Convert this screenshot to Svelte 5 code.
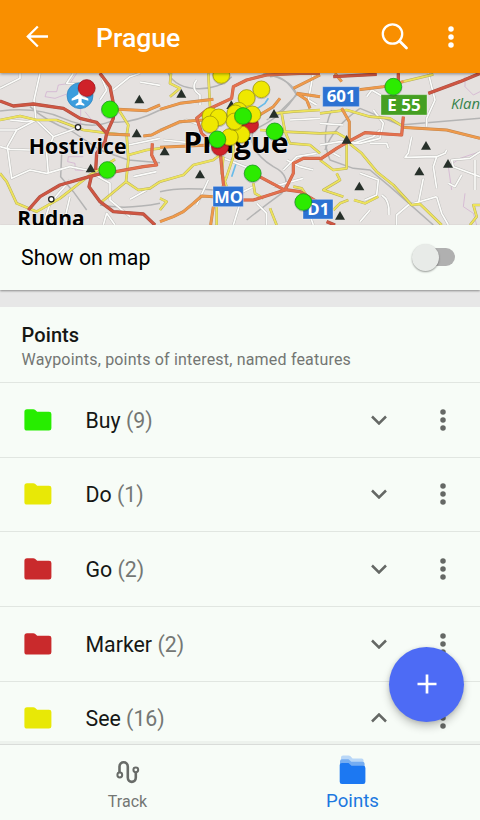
<script>
  const groups = [
    { name: 'Buy', count: 9, color: '#27ed00' },
    { name: 'Do', count: 1, color: '#e8e806' },
    { name: 'Go', count: 2, color: '#c92a2c' },
    { name: 'Marker', count: 2, color: '#c92a2c' },
    { name: 'See', count: 16, color: '#e8e806', open: true }
  ];

  // Map geometry is drawn at three units per pixel.
  const rails = [
    'M0 123 Q110 110 190 145 T330 155 Q390 165 480 120',
    'M90 110 Q140 155 210 180 L300 240 L385 270 L480 278',
    'M185 250 L182 320 L220 365 L260 420 M300 405 Q380 420 480 400',
    'M505 10 C530 70 650 70 695 20 M790 10 Q880 30 890 75 L845 120 L800 150',
    'M890 70 Q850 140 760 180 Q740 240 820 290 Q880 320 845 370 Q790 410 740 450',
    'M480 365 Q540 350 640 360 M890 75 Q850 10 810 20',
    'M995 120 Q960 200 990 270 L1060 295 L1110 300 L1170 350 L1300 465',
    'M1080 115 L1140 140 L1200 165 L1440 145 M975 240 Q1000 170 1080 115'
  ];
  const lanes = [
    'M120 10 L102 90 L108 150 L50 180 L22 230 L35 325 L90 300 L140 310 L210 290',
    'M0 55 L60 25 L60 10 M30 150 L80 155 L108 150 L160 200 L140 250 L145 310',
    'M0 230 L30 238 L90 240 M160 200 L230 175 M210 290 L260 300 L330 340 L330 390 L390 440',
    'M0 180 L50 180 M220 10 L200 40 L245 42 M340 60 L390 20 L420 10',
    'M130 465 L150 400 L210 330 M310 465 L320 430 L345 465 M400 320 L470 305 M390 388 L440 360',
    'M300 10 L320 60 L300 90 M420 36 L480 46 M210 380 L190 465 M385 225 L480 205',
    'M480 180 L560 150 L600 165 M490 210 L590 220 M590 30 Q570 55 600 75 L600 105',
    'M850 300 L890 260 L950 250 M860 270 L900 290 L940 300 M820 350 L910 325',
    'M770 400 L800 430 L800 465 M625 330 L590 405 M720 400 L700 465 M910 380 L940 465',
    'M870 150 L960 145 M940 10 L925 90 L950 105 M760 350 L720 370 M660 260 L760 300',
    'M960 225 L1020 215 L1080 220 L1140 205 L1150 160 L1120 120 M1060 220 L1120 200 L1140 180 M1110 220 L1160 220 L1165 235',
    'M1285 10 L1305 90 L1280 145 L1280 170 M1100 80 L1115 60 L1150 80 M1210 95 L1270 80',
    'M1235 200 L1225 250 L1215 262 L1310 260 L1335 250 L1340 240 M1310 260 L1300 290 L1310 355',
    'M1440 245 L1410 265 L1355 270 L1360 290 L1440 320 M1425 270 L1425 360 M1385 315 L1365 350 L1345 340',
    'M1080 310 L1135 330 L1130 375 L1095 390 M1145 375 Q1170 390 1167 435 M1310 380 L1225 405 L1190 435 L1190 465 M1270 325 L1255 400',
    'M1310 380 L1325 430 L1345 465 M1110 420 L1080 455 M1000 250 L1020 260 M960 160 L1030 165'
  ];
  const yellows = [
    'M0 150 L60 138 L110 150 L170 150 L250 180 L330 190 L380 195 L385 270 L378 335 L300 400',
    'M355 118 L385 165 L380 195 M385 255 L440 240 L480 235 M378 335 L415 360 L450 355 L480 335',
    'M0 310 L20 335 L50 400 L110 425 L180 385 L270 315 L345 268',
    'M625 10 L630 110 M513 10 L510 40 L540 55 L510 80 M480 335 L550 315 L580 285 L640 270 L680 240',
    'M780 180 L850 185 L960 190 M825 130 L880 125 L960 120 M845 130 L855 185 L870 220 L930 225 L960 250',
    'M700 220 L700 260 L680 320 L660 370 M670 260 L665 310 L680 350 M760 340 L765 370 L790 385',
    'M480 385 L500 395 L480 420 M880 350 L905 355 L925 385 M650 410 L650 465 M810 415 L830 465',
    'M960 130 L1040 120 L1110 140 L1170 145 L1210 170 M1210 35 L1300 13 M1050 222 L1085 250 L1130 305 L1180 345 L1235 405 L1260 402 L1325 465',
    'M960 190 L1010 188 L1040 205 L1040 295 L1000 300 L960 270 M1010 310 L1020 330 L970 360 L1030 380',
    'M1062 390 L1095 400 L1135 380 M1000 420 L1020 400 L1045 390 M1440 405 L1420 405 L1430 440 L1410 465'
  ];
  const oranges = [
    'M355 118 L440 122 L480 105 M320 192 L390 195 M430 198 L455 195 L480 182',
    'M480 118 L540 100 L640 88 M480 182 L540 155 L610 150 L640 125 M480 232 L630 225',
    'M480 455 L520 440 L550 425 L580 400 L605 378 L640 380 M632 465 L640 410',
    'M890 70 L960 80 M890 70 L920 90 L930 115 M770 140 L820 110 L840 85 M880 55 L960 15',
    'M1070 60 L1150 50 L1210 35 M1005 10 L1025 35 M1025 115 L1048 155 L1048 220 M1205 172 L1340 180 L1440 205'
  ];
  const corals = [
    'M457 220 L455 255 L470 285 L430 290 L335 307',
    'M960 10 L900 10 L800 15 L740 30 L700 50 L695 85 L620 120 L590 145 L605 190 L660 240 L670 340 L680 390 L760 390 L855 360 L880 310 L880 280 L910 265 L960 265',
    'M760 310 L850 358 L900 365 L960 400 M960 268 L1010 235 L1045 215 L1095 188 L1205 195 L1210 140'
  ];
  const reds = [
    'M0 93 L40 108 L100 102 L190 115 L240 145 L290 157 L320 190 L315 215 L290 250 L287 300',
    'M300 10 L330 50 L340 100 L340 145 L320 190',
    'M85 420 L120 380 L180 345 L260 322 L305 310 M275 315 L267 350 L300 395 L340 425 L430 432 L465 465',
    'M1285 70 L1380 35 L1440 10 M1195 10 L1195 40 M980 455 L1005 465 M1000 20 L1130 13'
  ];
  const peaks = [
    [418, 88], [410, 190], [272, 295], [544, 71], [694, 105], [822, 131], [494, 244], [600, 313],
    [1040, 209], [1278, 227], [1344, 281], [1258, 304], [1078, 349], [1020, 437]
  ];
  const pins = [
    [260, 54, 'r'], [330, 118, 'g'], [322, 300, 'g'], [664, 15, 'y'], [784, 58, 'y'], [740, 84, 'y'],
    [660, 231, 'r'], [750, 164, 'r'], [632, 138, 'y'], [656, 142, 'y'], [630, 163, 'y'], [716, 122, 'y'],
    [706, 130, 'y'], [757, 133, 'y'], [724, 193, 'y'], [689, 201, 'y'], [704, 154, 'y'], [729, 138, 'g'],
    [652, 208, 'g'], [824, 184, 'g'], [758, 310, 'g'], [910, 396, 'g'], [1180, 50, 'g']
  ];
  const pinColors = {
    r: ['#cf2229', '#a91820'],
    g: ['#2ceb00', '#1ba21d'],
    y: ['#efe800', '#aaa20c']
  };
</script>

{#snippet dots(color)}
  <svg class="dots" viewBox="0 0 8 24" fill={color}>
    <circle cx="4" cy="4" r="2.75" /><circle cx="4" cy="12" r="2.75" /><circle cx="4" cy="20" r="2.75" />
  </svg>
{/snippet}

<div class="screen">
  <header>
    <svg class="back" viewBox="0 0 24 24" fill="none" stroke="#fff" stroke-width="2.3">
      <path d="M23 11.5H3.2M12.8 1.5L2.8 11.5L12.8 21.5" />
    </svg>
    <h1>Prague</h1>
    <svg class="search" viewBox="0 0 28 28" fill="none" stroke="#fff">
      <circle cx="11.5" cy="11" r="9.7" stroke-width="2.3" />
      <path d="M18.5 18L25.5 25" stroke-width="2.8" stroke-linecap="round" />
    </svg>
    {@render dots('#fff')}
  </header>

  <svg class="map" viewBox="0 9 1440 456" fill="none" stroke-linejoin="round">
    <rect y="9" width="1440" height="456" fill="#e5e1df" />
    <g stroke="#b4b4b4" stroke-width="4.5">{#each rails as d}<path {d} />{/each}</g>
    <g stroke="#cfa9cf" stroke-width="2">
      <path d="M230 10L210 40L175 45L170 65L140 65L135 80L165 85L220 65M242 110V165M255 125L275 150M205 260L203 275L225 280V300L250 302M205 260H250M1395 20V50L1420 75L1440 65M1440 245L1380 265L1345 290L1355 360M1395 370L1390 410L1420 430L1430 465" />
    </g>
    <path d="M805 85L795 100L750 130M710 275L695 320" stroke="#68bbe9" stroke-width="5" />
    <g stroke="#bdbdba" stroke-width="8">{#each lanes as d}<path {d} />{/each}</g>
    <g stroke="#fcfcfa" stroke-width="5">{#each lanes as d}<path {d} />{/each}</g>
    <g stroke="#b5ac5c" stroke-width="8">{#each yellows as d}<path {d} />{/each}</g>
    <g stroke="#ede35c" stroke-width="5.5">{#each yellows as d}<path {d} />{/each}</g>
    <g stroke="#bd8450" stroke-width="9">{#each oranges as d}<path {d} />{/each}</g>
    <g stroke="#ef9a4b" stroke-width="6.5">{#each oranges as d}<path {d} />{/each}</g>
    <g stroke="#bd6048" stroke-width="9.5">{#each corals as d}<path {d} />{/each}</g>
    <g stroke="#e4714e" stroke-width="7">{#each corals as d}<path {d} />{/each}</g>
    <g stroke="#a95044" stroke-width="10">{#each reds as d}<path {d} />{/each}</g>
    <g stroke="#cf5642" stroke-width="7">{#each reds as d}<path {d} />{/each}</g>
    {#each peaks as [x, y]}
      <path d="M{x} {y - 14}L{x + 15} {y + 12}H{x - 15}Z" fill="#27302a" />
    {/each}
    <circle cx="234" cy="172" r="8" fill="#fff" stroke="#222" stroke-width="4" />
    <circle cx="154" cy="388" r="8" fill="#fff" stroke="#222" stroke-width="4" />
    <g class="place">
      <text x="86" y="251" font-size="63" textLength="294" lengthAdjust="spacingAndGlyphs">Hostivice</text>
      <text x="52" y="467" font-size="63" textLength="202" lengthAdjust="spacingAndGlyphs">Rudna</text>
      <text x="550" y="249" font-size="86" textLength="316" lengthAdjust="spacingAndGlyphs">Prague</text>
    </g>
    <g class="shield">
      <rect x="639" y="349" width="91" height="61" fill="#2d72d2" />
      <text x="642" y="398" font-size="50" textLength="87" lengthAdjust="spacingAndGlyphs">MO</text>
      <rect x="909" y="388" width="90" height="59" fill="#2d72d2" />
      <text x="922" y="436" font-size="50" textLength="66" lengthAdjust="spacingAndGlyphs">D1</text>
      <rect x="968" y="50" width="110" height="60" fill="#2d72d2" />
      <text x="980" y="97" font-size="50" textLength="87" lengthAdjust="spacingAndGlyphs">601</text>
      <rect x="1143" y="74" width="138" height="61" fill="#459f22" />
      <text x="1162" y="122" font-size="50" textLength="100" lengthAdjust="spacingAndGlyphs">E 55</text>
    </g>
    <text class="area" x="1353" y="116" font-size="43" textLength="87" lengthAdjust="spacingAndGlyphs">Klan</text>
    <circle cx="240" cy="77" r="39" fill="#3b9ddd" stroke="#2880bd" stroke-width="2" />
    <path d="M240 55q5 3 5 18l20 13v6l-20-6v11l8 6v4l-13-3l-13 3v-4l8-6v-11l-20 6v-6l20-13q0-15 5-18Z" fill="#fff" />
    {#each pins as [x, y, c]}
      <circle cx={x} cy={y + 2} r="26" stroke="#000" stroke-opacity=".2" stroke-width="3" />
      <circle cx={x} cy={y} r="25" fill={pinColors[c][0]} stroke={pinColors[c][1]} stroke-width="2.5" />
    {/each}
  </svg>

  <section class="show">
    <span>Show on map</span>
    <div class="switch"><i></i></div>
  </section>
  <div class="gap"></div>

  <main>
    <div class="heading">
      <h2>Points</h2>
      <p>Waypoints, points of interest, named features</p>
    </div>
    {#each groups as g}
      <div class="row">
        <svg class="folder" viewBox="0 0 28 22" fill={g.color}>
          <path d="M3 .2H9.3Q10.3.2 11 .8L13.2 2.8H25Q27.4 2.8 27.4 5V19.2Q27.4 21.6 25 21.6H3Q.4 21.6.4 19.2V2.8Q.4.2 3 .2Z" />
        </svg>
        <span class="name">{g.name} <em>({g.count})</em></span>
        <svg class="chevron" class:open={g.open} viewBox="0 0 16 10" fill="none" stroke="#656865" stroke-width="2.5">
          <path d="M1 1.5L8 8.5L15 1.5" />
        </svg>
        {@render dots('#656865')}
      </div>
    {/each}
    <button class="fab" aria-label="Add">
      <svg viewBox="0 0 20 20" stroke="#fff" stroke-width="2.7"><path d="M.5 10H19.5M10 .5V19.5" /></svg>
    </button>
  </main>

  <nav>
    <div class="tab">
      <svg class="track" viewBox="0 0 24 24" fill="none" stroke="#686b68" stroke-width="2">
        <circle cx="3.8" cy="15" r="2.4" /><circle cx="19.8" cy="9.8" r="2.4" />
        <path stroke-width="2.6" d="M3.5 12.5V6.5C3.5.9 11.8.9 11.8 6.5V17.5C11.8 23.3 19.8 23.3 19.8 17.5V12.3" />
      </svg>
      <span>Track</span>
    </div>
    <div class="tab active">
      <svg class="stack" viewBox="0 0 28 30">
        <path d="M4 .5H9.5Q10.5.5 11.2 1.1L13.6 3.4H22.5Q24.6 3.4 24.6 5.4V20H2V2.5Q2 .5 4 .5Z" fill="#b9d7f7" />
        <path d="M3 4.2H9.5L12.3 6.8H23.4Q25.6 6.8 25.6 8.8V22H1V6.2Q1 4.2 3 4.2Z" fill="#75adf2" />
        <path d="M3 8H9.5L12.5 10.8H24.2Q26.4 10.8 26.4 13V26.7Q26.4 29 24.2 29H3Q.7 29 .7 26.7V10Q.7 8 3 8Z" fill="#1c78f2" />
      </svg>
      <span>Points</span>
    </div>
  </nav>
</div>

<style>
  .screen {
    width: 480px;
    height: 820px;
    display: flex;
    flex-direction: column;
    overflow: hidden;
    background: #f7fcf7;
    font-family: Roboto, 'Noto Sans', sans-serif;
    color: #151715;
  }
  svg { display: block; flex: none; }
  h1, h2, p { margin: 0; }
  header {
    flex: none;
    height: 73px;
    box-sizing: border-box;
    display: flex;
    align-items: center;
    padding: 0 25.5px 0 25px;
    background: #f98f00;
    box-shadow: 0 1px 3px #0006;
    position: relative;
    z-index: 1;
  }
  h1 {
    flex: 1;
    margin-left: 47px;
    padding-top: 2px;
    font-size: 26.6px;
    font-weight: 500;
    line-height: 32px;
    color: #fff;
  }
  .back { width: 24px; height: 24px; }
  .search { width: 28px; height: 28px; margin-right: 38px; }
  .dots { width: 8px; height: 24px; }
  .map { width: 480px; height: 152px; }
  .place text {
    font-family: 'Open Sans', 'Noto Sans', sans-serif;
    font-weight: 700;
    fill: #000;
    stroke: #fff8;
    stroke-width: 4;
    paint-order: stroke;
  }
  .shield rect { stroke: #fff; stroke-opacity: .5; stroke-width: 2; }
  .shield text { font-family: 'Open Sans', sans-serif; font-weight: 700; fill: #fff; }
  .area { font-family: 'Open Sans', sans-serif; font-style: italic; fill: #35834b; }
  .show {
    flex: none;
    height: 64.5px;
    display: flex;
    align-items: center;
    justify-content: space-between;
    padding: 0 25px 0 21px;
    font-size: 21.33px;
    color: #000;
    background: #f7fcf7;
    box-shadow: 0 1px 2px #0006;
    position: relative;
  }
  .show span { padding-top: 1px; }
  .switch {
    width: 38px;
    height: 18px;
    border-radius: 9px;
    background: #b0b0b0;
    display: flex;
    align-items: center;
  }
  .switch i {
    width: 27px;
    height: 27px;
    margin-left: -5px;
    border-radius: 50%;
    background: #e8ebe8;
    box-shadow: 0 1px 2px #0006;
  }
  .gap { flex: none; height: 17.5px; background: #e7e7e7; }
  main {
    height: 437px;
    flex: none;
    position: relative;
    overflow: hidden;
  }
  .heading { height: 75px; padding: 16px 21.5px 0; box-sizing: border-box; }
  h2 { font-size: 20px; line-height: 25px; font-weight: 500; letter-spacing: .1px; }
  p { font-size: 16px; line-height: 24px; letter-spacing: .19px; color: #737673; }
  .row {
    height: 74.67px;
    box-sizing: border-box;
    border-top: 1px solid #e1e6e1;
    display: flex;
    align-items: center;
    padding: 0 33.5px 0 23.5px;
  }
  .folder { width: 28px; height: 22px; }
  .name { flex: 1; margin-left: 34px; padding-top: 1px; font-size: 21.33px; }
  em { font-style: normal; color: #747774; }
  .chevron { width: 16px; height: 10px; margin-right: 52px; }
  .open { transform: scaleY(-1); }
  .fab {
    position: absolute;
    left: 389px;
    top: 339.5px;
    width: 75px;
    height: 75px;
    padding: 0;
    border: 0;
    border-radius: 50%;
    background: #4d6bf5;
    display: grid;
    place-items: center;
    box-shadow: 0 5px 8px #0003, 0 1px 4px #0002;
  }
  .fab svg { width: 20px; height: 20px; }
  nav {
    flex: 1;
    display: flex;
    padding: 0 15px;
    border-top: 1px solid #d9dcd9;
    background: #f7fcf7;
    box-shadow: 0 -3px 0 #0000000a;
    position: relative;
  }
  .tab {
    flex: 1;
    display: flex;
    flex-direction: column;
    align-items: center;
    font-size: 16px;
    color: #737673;
  }
  .tab span { line-height: 22px; }
  .track { width: 24px; height: 24px; margin: 15px 0 7px; }
  .stack { width: 28px; height: 30px; margin: 10px 0 5px; }
  .active { color: #1c78e0; font-size: 18.67px; }
</style>
